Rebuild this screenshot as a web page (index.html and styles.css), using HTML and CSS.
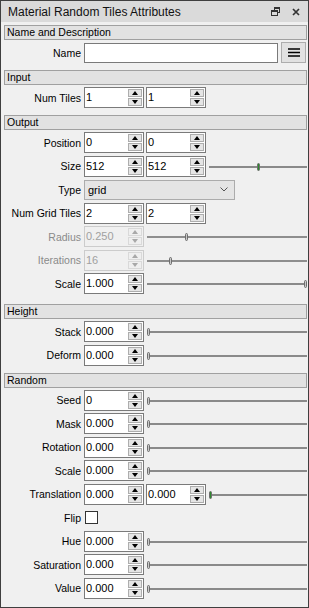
FILE: index.html
```html
<!DOCTYPE html>
<html>
<head>
	<title>Material Random Tiles Attributes</title>
	<meta charset="utf-8">
	<link rel="stylesheet" href="styles.css">
</head>
<body>
	<div class="panel">
		<div class="titlebar">
			<span class="title">Material Random Tiles Attributes</span>
			<span class="tb-icons">
				<svg width="9" height="9" viewBox="0 0 9 9" fill="#333">
					<rect x="3" y="0" width="6" height="2"/>
					<rect x="8" y="2" width="1" height="4"/>
					<rect x="7" y="5" width="1" height="1"/>
					<rect x="3" y="2" width="1" height="1"/>
					<rect x="0" y="3" width="7" height="2"/>
					<rect x="0" y="5" width="1" height="4"/>
					<rect x="6" y="5" width="1" height="4"/>
					<rect x="0" y="8" width="7" height="1"/>
				</svg>
				<svg width="8" height="8" viewBox="0 0 8 8">
					<path d="M1 1L7 7M7 1L1 7" stroke="#333" stroke-width="1.7"/>
				</svg>
			</span>
		</div>

		<div class="content">
			<div class="section">Name and Description</div>
			<div class="group">
				<div class="row">
					<span class="lbl">Name</span>
					<span class="text-field"></span>
					<span class="menu-btn">
						<svg width="12" height="9" viewBox="0 0 12 9">
							<path d="M0 1H12M0 4.5H12M0 8H12" stroke="#000" stroke-width="1.5"/>
						</svg>
					</span>
				</div>
			</div>

			<div class="section">Input</div>
			<div class="group">
				<div class="row">
					<span class="lbl">Num Tiles</span>
					<span class="spin"><span class="val">1</span><span class="btns"><span class="btn up"></span><span class="btn down"></span></span></span>
					<span class="spin"><span class="val">1</span><span class="btns"><span class="btn up"></span><span class="btn down"></span></span></span>
				</div>
			</div>

			<div class="section">Output</div>
			<div class="group group-tall">
				<div class="row">
					<span class="lbl">Position</span>
					<span class="spin"><span class="val">0</span><span class="btns"><span class="btn up"></span><span class="btn down"></span></span></span>
					<span class="spin"><span class="val">0</span><span class="btns"><span class="btn up"></span><span class="btn down"></span></span></span>
				</div>
				<div class="row">
					<span class="lbl">Size</span>
					<span class="spin"><span class="val">512</span><span class="btns"><span class="btn up"></span><span class="btn down"></span></span></span>
					<span class="spin"><span class="val">512</span><span class="btns"><span class="btn up"></span><span class="btn down"></span></span></span>
					<span class="slider"><span class="lane"><span class="knob live" style="left: 51%"></span></span></span>
				</div>
				<div class="row">
					<span class="lbl">Type</span>
					<span class="combo">
						<span class="val">grid</span>
						<svg width="8" height="5" viewBox="0 0 8 5">
							<path d="M0.5 0.5L4 4L7.5 0.5" stroke="#555" fill="none"/>
						</svg>
					</span>
				</div>
				<div class="row">
					<span class="lbl">Num Grid Tiles</span>
					<span class="spin"><span class="val">2</span><span class="btns"><span class="btn up"></span><span class="btn down"></span></span></span>
					<span class="spin"><span class="val">2</span><span class="btns"><span class="btn up"></span><span class="btn down"></span></span></span>
				</div>
				<div class="row off">
					<span class="lbl">Radius</span>
					<span class="spin"><span class="val">0.250</span><span class="btns"><span class="btn up"></span><span class="btn down"></span></span></span>
					<span class="slider"><span class="lane"><span class="knob" style="left: 24%"></span></span></span>
				</div>
				<div class="row off">
					<span class="lbl">Iterations</span>
					<span class="spin"><span class="val">16</span><span class="btns"><span class="btn up"></span><span class="btn down"></span></span></span>
					<span class="slider"><span class="lane"><span class="knob" style="left: 14%"></span></span></span>
				</div>
				<div class="row">
					<span class="lbl">Scale</span>
					<span class="spin"><span class="val">1.000</span><span class="btns"><span class="btn up"></span><span class="btn down"></span></span></span>
					<span class="slider"><span class="lane"><span class="knob" style="left: 100%"></span></span></span>
				</div>
			</div>

			<div class="section">Height</div>
			<div class="group">
				<div class="row">
					<span class="lbl">Stack</span>
					<span class="spin"><span class="val">0.000</span><span class="btns"><span class="btn up"></span><span class="btn down"></span></span></span>
					<span class="slider"><span class="lane"><span class="knob" style="left: 0%"></span></span></span>
				</div>
				<div class="row">
					<span class="lbl">Deform</span>
					<span class="spin"><span class="val">0.000</span><span class="btns"><span class="btn up"></span><span class="btn down"></span></span></span>
					<span class="slider"><span class="lane"><span class="knob" style="left: 0%"></span></span></span>
				</div>
			</div>

			<div class="section">Random</div>
			<div class="group">
				<div class="row">
					<span class="lbl">Seed</span>
					<span class="spin"><span class="val">0</span><span class="btns"><span class="btn up"></span><span class="btn down"></span></span></span>
					<span class="slider"><span class="lane"><span class="knob" style="left: 0%"></span></span></span>
				</div>
				<div class="row">
					<span class="lbl">Mask</span>
					<span class="spin"><span class="val">0.000</span><span class="btns"><span class="btn up"></span><span class="btn down"></span></span></span>
					<span class="slider"><span class="lane"><span class="knob" style="left: 0%"></span></span></span>
				</div>
				<div class="row">
					<span class="lbl">Rotation</span>
					<span class="spin"><span class="val">0.000</span><span class="btns"><span class="btn up"></span><span class="btn down"></span></span></span>
					<span class="slider"><span class="lane"><span class="knob" style="left: 0%"></span></span></span>
				</div>
				<div class="row">
					<span class="lbl">Scale</span>
					<span class="spin"><span class="val">0.000</span><span class="btns"><span class="btn up"></span><span class="btn down"></span></span></span>
					<span class="slider"><span class="lane"><span class="knob" style="left: 0%"></span></span></span>
				</div>
				<div class="row">
					<span class="lbl">Translation</span>
					<span class="spin"><span class="val">0.000</span><span class="btns"><span class="btn up"></span><span class="btn down"></span></span></span>
					<span class="spin"><span class="val">0.000</span><span class="btns"><span class="btn up"></span><span class="btn down"></span></span></span>
					<span class="slider"><span class="lane"><span class="knob live" style="left: 0%"></span></span></span>
				</div>
				<div class="row">
					<span class="lbl">Flip</span>
					<span class="check"></span>
				</div>
				<div class="row">
					<span class="lbl">Hue</span>
					<span class="spin"><span class="val">0.000</span><span class="btns"><span class="btn up"></span><span class="btn down"></span></span></span>
					<span class="slider"><span class="lane"><span class="knob" style="left: 0%"></span></span></span>
				</div>
				<div class="row">
					<span class="lbl">Saturation</span>
					<span class="spin"><span class="val">0.000</span><span class="btns"><span class="btn up"></span><span class="btn down"></span></span></span>
					<span class="slider"><span class="lane"><span class="knob" style="left: 0%"></span></span></span>
				</div>
				<div class="row">
					<span class="lbl">Value</span>
					<span class="spin"><span class="val">0.000</span><span class="btns"><span class="btn up"></span><span class="btn down"></span></span></span>
					<span class="slider"><span class="lane"><span class="knob" style="left: 0%"></span></span></span>
				</div>
			</div>
		</div>
	</div>
</body>
</html>
```

FILE: styles.css
```css
html, body {
	margin: 0;
	background-color: #F0F0F0;
}

body {
	font-family: "Liberation Sans", Arial, sans-serif;
	font-size: 10.5px;
	color: #000;
}

.panel {
	width: 309px;
	height: 608px;
	box-sizing: border-box;
	border: 1px solid #3F3F3F;
	background-color: #F0F0F0;
	overflow: hidden;
}

.titlebar {
	height: 21px;
	background-color: #DADADA;
	display: flex;
	align-items: center;
	padding: 0 8px 0 7px;
}

.title {
	flex: 1;
	font-size: 12px;
	color: #111;
}

.tb-icons {
	display: flex;
	align-items: center;
	gap: 12px;
}

.content {
	padding: 3px 1px 0 3px;
}

.section {
	height: 15px;
	box-sizing: border-box;
	border: 1px solid #A0A0A0;
	background-color: #E2E2E2;
	padding: 0 2px;
	line-height: 13px;
}

.group {
	display: flex;
	flex-direction: column;
	gap: 2.5px;
	padding: 2px 0 7px;
}

.group-tall {
	padding-bottom: 10px;
}

.row {
	display: flex;
	align-items: center;
	gap: 2px;
	height: 21px;
}

.lbl {
	width: 77px;
	flex-shrink: 0;
	margin-right: 1px;
	text-align: right;
	white-space: nowrap;
}

.off .lbl {
	color: #8A8A8A;
}

/* text field + menu button */
.text-field {
	flex: 1;
	height: 20px;
	box-sizing: border-box;
	border: 1px solid #7A7A7A;
	background-color: #FFF;
}

.menu-btn {
	width: 25px;
	height: 21px;
	box-sizing: border-box;
	margin: 0 1px 0 1px;
	border: 1px solid #ADADAD;
	background-color: #E1E1E1;
	display: flex;
	align-items: center;
	justify-content: center;
}

/* spin boxes */
.spin {
	width: 60px;
	height: 21px;
	box-sizing: border-box;
	border: 1px solid #7A7A7A;
	background-color: #FFF;
	display: flex;
	flex-shrink: 0;
}

.spin .val {
	flex: 1;
	padding-left: 1px;
	font-size: 11px;
	line-height: 19px;
}

.btns {
	width: 14px;
	display: flex;
	flex-direction: column;
	gap: 1px;
	padding: 1px 1px 1px 0;
}

.btn {
	flex: 1;
	border: 1px solid #ADADAD;
	background-color: #E5E5E5;
	display: flex;
	align-items: center;
	justify-content: center;
}

.btn::after {
	content: "";
	border-left: 3.5px solid transparent;
	border-right: 3.5px solid transparent;
}

.up::after {
	border-bottom: 4px solid #000;
}

.down::after {
	border-top: 4px solid #000;
}

.off .spin {
	border-color: #CCC;
	background-color: #F0F0F0;
	color: #A0A0A0;
}

.off .btn {
	border-color: #D9D9D9;
	background-color: #EFEFEF;
}

.off .up::after {
	border-bottom-color: #A8A8A8;
}

.off .down::after {
	border-top-color: #A8A8A8;
}

/* combo */
.combo {
	width: 151px;
	height: 20px;
	box-sizing: border-box;
	border: 1px solid #ACACAC;
	background-color: #E5E5E5;
	display: flex;
	align-items: center;
	padding: 0 6px 0 3px;
}

.combo .val {
	flex: 1;
	font-size: 11px;
}

/* checkbox */
.check {
	width: 13px;
	height: 13px;
	box-sizing: border-box;
	margin-left: 1px;
	border: 1px solid #333;
	background-color: #FFF;
}

/* sliders */
.slider {
	flex: 1;
	height: 21px;
	margin-left: 1px;
	position: relative;
}

.slider::before {
	content: "";
	position: absolute;
	left: 0;
	right: 0;
	top: 10px;
	height: 2px;
	background-color: #8A8A8A;
}

.lane {
	position: absolute;
	left: 0;
	right: 3px;
	top: 7px;
	height: 8px;
}

.knob {
	position: absolute;
	top: 0;
	width: 3px;
	height: 8px;
	box-sizing: border-box;
	border: 1px solid #6E6E6E;
	border-radius: 1.5px;
	background-color: #C8C8C8;
}

.knob.live {
	background-color: #2E8B2E;
}

.off .slider::before {
	background-color: #8E8E8E;
}
```
